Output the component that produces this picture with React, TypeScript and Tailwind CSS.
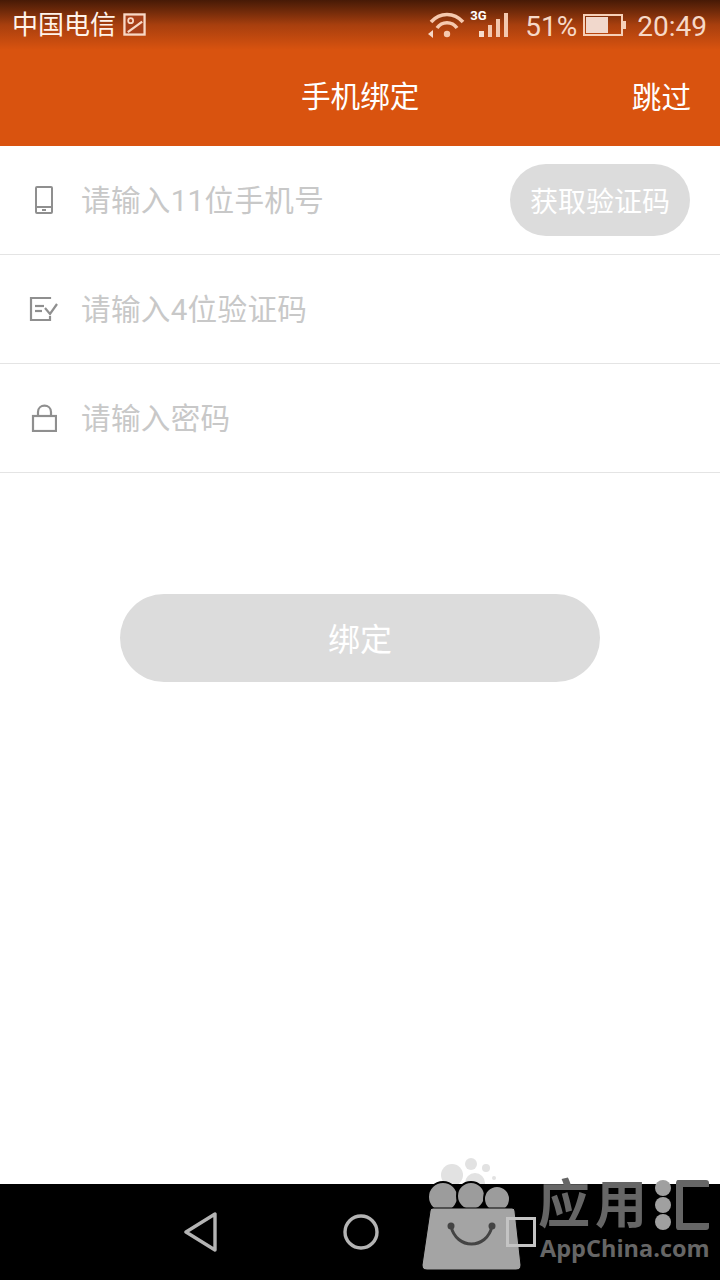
import React from 'react';

const FONT = 'font-["Roboto","Noto_Sans_CJK_SC",sans-serif]';

function StatusBar() {
  return (
    <div className="flex h-[50px] items-center justify-between bg-gradient-to-b from-[#471a06] via-[#a83f0e] via-50% to-[#d9530f] pl-[12px] pr-[13px] text-[#f6d9c8]">
      <div className="flex items-center gap-[7px]">
        <span className="text-[26px] leading-none text-[#fff3ea]">中国电信</span>
        <svg width="23" height="23" viewBox="0 0 24 24" fill="none" stroke="#f8d8c6" strokeWidth="2.4" className="mb-[1px]">
          <rect x="1.5" y="1.5" width="21" height="21" fill="#a8401a" />
          <circle cx="8" cy="8" r="2.6" strokeWidth="1.8" />
          <path d="M5 20 L20 9" />
        </svg>
      </div>
      <div className="flex items-center font-['Roboto',sans-serif] text-[28px] leading-none">
        <svg width="38" height="28" viewBox="0 0 38 28" fill="none" stroke="#f6c9ae" strokeWidth="3.6" className="mr-[13px]">
          <path d="M3 11 C12 1 26 1 35 11" />
          <path d="M9 17 C14 10 24 10 29 17" />
          <circle cx="19" cy="23" r="3.2" fill="#f6c9ae" stroke="none" />
          <path d="M0 23 L5 19 L5 27 Z" fill="#f6d9c8" stroke="none" />
        </svg>
        <div className="relative mr-[17px] h-[24px] w-[29px]">
          <span className="absolute left-[-9px] top-[-4px] text-[13px] font-bold text-white">3G</span>
          <div className="absolute bottom-0 left-0 flex items-end gap-[4px]">
            <div className="h-[6px] w-[5px] bg-[#f6dccb]" />
            <div className="h-[12px] w-[4px] bg-[#f3c8ae]" />
            <div className="h-[18px] w-[4px] bg-[#f3c8ae]" />
            <div className="h-[24px] w-[4px] bg-[#f3c8ae]" />
          </div>
        </div>
        <span className="mr-[6px] pt-[3px]">51%</span>
        <div className="mr-[11px] flex items-center">
          <div className="flex h-[22px] w-[40px] items-stretch border-2 border-[#f6d0b8] p-[1px]">
            <div className="w-[22px] bg-[#f1d8cc]" />
          </div>
          <div className="h-[8px] w-[3px] bg-[#f6d0b8]" />
        </div>
        <span className="pt-[3px]">20:49</span>
      </div>
    </div>
  );
}

function InputRow({ icon, placeholder, action }: { icon: React.ReactNode; placeholder: string; action?: string }) {
  return (
    <div className="flex h-[109px] items-center border-b border-[#e4e4e4] pl-[28px] pr-[30px]">
      <div className="flex w-[53px] shrink-0 items-center">{icon}</div>
      <span className="flex-1 pt-[4px] text-[29.6px] leading-none tracking-[0.3px] text-[#c8c8c8]">{placeholder}</span>
      {action && (
        <div className="flex h-[72px] w-[180px] items-center justify-center rounded-full bg-[#dcdcdc] pt-[6px] text-[28px] leading-none text-white">
          {action}
        </div>
      )}
    </div>
  );
}

function Watermark() {
  return (
    <div className="pointer-events-none absolute left-[420px] top-[1155px] h-[120px] w-[295px]">
      <svg width="110" height="120" viewBox="0 0 110 120" className="absolute left-0 top-0">
        <clipPath id="above-nav">
          <rect x="0" y="0" width="110" height="29" />
        </clipPath>
        <g fill="#e2e2e2" clipPath="url(#above-nav)">
          <circle cx="32" cy="20" r="11" />
          <circle cx="51" cy="9" r="6" />
          <circle cx="66" cy="13" r="4" />
          <circle cx="74" cy="23" r="2" />
          <circle cx="55" cy="28" r="10" />
        </g>
        <g fill="#9c9c9c" stroke="#000" strokeWidth="2">
          <circle cx="23" cy="42" r="15" />
          <circle cx="51" cy="41" r="14" />
          <circle cx="77" cy="44" r="13" />
        </g>
        <path d="M13 53 H92 Q95 53 95 56 L101 110 Q101 115 96 115 H7 Q2 115 2 110 L10 56 Q10 53 13 53 Z" fill="#a4a4a4" stroke="#000" strokeWidth="1" />
        <path d="M31 71 C36 95 67 95 72 71" fill="none" stroke="#444" strokeWidth="3" />
        <circle cx="31" cy="71" r="3.5" fill="#444" />
        <circle cx="72" cy="71" r="3.5" fill="#444" />
      </svg>
      <span className="absolute left-[118px] top-[25px] text-[52px] font-bold leading-none tracking-[5px] text-[#666]">应用</span>
      <div className="absolute left-[235px] top-[25px] flex flex-col gap-[1px]">
        <div className="h-[16px] w-[16px] rounded-full bg-[#a0a0a0]" />
        <div className="h-[16px] w-[16px] rounded-full bg-[#a0a0a0]" />
        <div className="h-[16px] w-[16px] rounded-full bg-[#a0a0a0]" />
      </div>
      <div className="absolute left-[256px] top-[25px] h-[50px] w-[33px] rounded-[3px] border-y-[7px] border-l-[7px] border-[#666]" />
      <span className="absolute left-[120px] top-[82px] font-['Open_Sans',sans-serif] text-[23.5px] font-bold leading-none text-[#666]">AppChina.com</span>
    </div>
  );
}

export default function App() {
  return (
    <div className={`relative flex h-[1280px] w-[720px] flex-col overflow-hidden bg-white ${FONT}`}>
      <header className="h-[146px] shrink-0 bg-[#d9530f]">
        <StatusBar />
        <div className="flex h-[96px] items-center justify-between pb-[1px] pl-[301px] pr-[29px] text-white">
          <h1 className="text-[29.6px] font-normal leading-none">手机绑定</h1>
          <span className="pt-[2px] text-[29.6px] leading-none">跳过</span>
        </div>
      </header>

      <InputRow
        placeholder="请输入11位手机号"
        action="获取验证码"
        icon={
          <svg width="20" height="28" viewBox="0 0 20 28" fill="none" stroke="#8f8f8f" strokeWidth="2" className="ml-[6px]">
            <rect x="2" y="1" width="16" height="26" rx="1" />
            <path d="M2 21 H18" />
            <path d="M8 24 H12" />
          </svg>
        }
      />
      <InputRow
        placeholder="请输入4位验证码"
        icon={
          <svg width="30" height="26" viewBox="0 0 30 26" fill="none" stroke="#8f8f8f" strokeWidth="2.2" className="ml-[1px]">
            <path d="M21 3 V2 H2 V24 H21 V20" />
            <path d="M6 10 H15" />
            <path d="M6 15 H13" />
            <path d="M16 12 L21 18 L28 8" />
          </svg>
        }
      />
      <InputRow
        placeholder="请输入密码"
        icon={
          <svg width="26" height="28" viewBox="0 0 26 28" fill="none" stroke="#8f8f8f" strokeWidth="2.2" className="ml-[3px]">
            <rect x="2" y="12" width="23" height="15" />
            <path d="M7 12 V8 C7 -0.5 20 -0.5 20 8 V12" />
          </svg>
        }
      />

      <div className="mt-[121px] flex justify-center">
        <div className="flex h-[88px] w-[480px] items-center justify-center rounded-full bg-[#dcdcdc] pt-[4px] text-[32px] leading-none text-white">
          绑定
        </div>
      </div>

      <div className="flex-1" />

      <nav className="relative flex h-[96px] shrink-0 items-center bg-black pl-[184px]">
        <svg width="34" height="40" viewBox="0 0 34 40" fill="none" stroke="#b4b4b4" strokeWidth="3.4" strokeLinejoin="round">
          <path d="M31 2 V38 L2 20 Z" />
        </svg>
        <svg width="36" height="36" viewBox="0 0 36 36" fill="none" stroke="#b4b4b4" strokeWidth="3.4" className="ml-[125px]">
          <circle cx="18" cy="18" r="16" />
        </svg>
      </nav>

      <Watermark />
      <div className="absolute left-[506px] top-[1217px] h-[30px] w-[30px] border-[3px] border-[#c4c4c4]" />
    </div>
  );
}
